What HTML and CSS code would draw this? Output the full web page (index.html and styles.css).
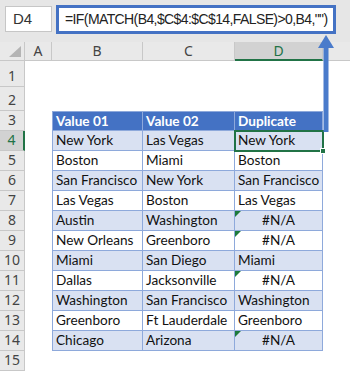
FILE: index.html
```html
<!DOCTYPE html>
<html>
<head>
<meta charset="utf-8">
<link rel="stylesheet" href="styles.css">
</head>
<body>
<div class="app">
  <div class="fbar">
    <div class="namebox">D4</div>
    <div class="formula">=IF(MATCH(B4,$C$4:$C$14,FALSE)&gt;0,B4,"")</div>
  </div>
  <div class="sheet">
    <div class="ch corner"><span class="tri"></span></div>
    <div class="ch">A</div>
    <div class="ch">B</div>
    <div class="ch">C</div>
    <div class="ch sel">D</div>
    <div class="ch rest"></div>

    <div class="rh tall">1</div><div class="e"></div><div class="e"></div><div class="e"></div><div class="e"></div><div class="e"></div>
    <div class="rh">2</div><div class="e"></div><div class="e"></div><div class="e"></div><div class="e"></div><div class="e"></div>

    <div class="rh">3</div><div class="e"></div>
    <div class="c hd first">Value 01</div><div class="c hd">Value 02</div><div class="c hd">Duplicate</div><div class="e"></div>

    <div class="rh rsel">4</div><div class="e"></div>
    <div class="c b first">New York</div><div class="c b">Las Vegas</div><div class="c b active">New York<span class="handle"></span></div><div class="e"></div>

    <div class="rh">5</div><div class="e"></div>
    <div class="c first">Boston</div><div class="c">Miami</div><div class="c">Boston</div><div class="e"></div>

    <div class="rh">6</div><div class="e"></div>
    <div class="c b first">San Francisco</div><div class="c b">New York</div><div class="c b">San Francisco</div><div class="e"></div>

    <div class="rh">7</div><div class="e"></div>
    <div class="c first">Las Vegas</div><div class="c">Boston</div><div class="c">Las Vegas</div><div class="e"></div>

    <div class="rh">8</div><div class="e"></div>
    <div class="c b first">Austin</div><div class="c b">Washington</div><div class="c b na"><span class="err"></span>#N/A</div><div class="e"></div>

    <div class="rh">9</div><div class="e"></div>
    <div class="c first">New Orleans</div><div class="c">Greenboro</div><div class="c na"><span class="err"></span>#N/A</div><div class="e"></div>

    <div class="rh">10</div><div class="e"></div>
    <div class="c b first">Miami</div><div class="c b">San Diego</div><div class="c b">Miami</div><div class="e"></div>

    <div class="rh">11</div><div class="e"></div>
    <div class="c first">Dallas</div><div class="c">Jacksonville</div><div class="c na"><span class="err"></span>#N/A</div><div class="e"></div>

    <div class="rh">12</div><div class="e"></div>
    <div class="c b first">Washington</div><div class="c b">San Francisco</div><div class="c b">Washington</div><div class="e"></div>

    <div class="rh">13</div><div class="e"></div>
    <div class="c first">Greenboro</div><div class="c">Ft Lauderdale</div><div class="c">Greenboro</div><div class="e"></div>

    <div class="rh">14</div><div class="e"></div>
    <div class="c b first">Chicago</div><div class="c b">Arizona</div><div class="c b na"><span class="err"></span>#N/A</div><div class="e"></div>

    <div class="rh">15</div><div class="e"></div><div class="e"></div><div class="e"></div><div class="e"></div><div class="e"></div>
  </div>
  <svg class="arrow" width="20" height="102" viewBox="0 0 20 102">
    <polygon points="10,2 2,15 18,15" fill="#4a7bcb"/>
    <rect x="7.5" y="13" width="5" height="86" fill="#4a7bcb"/>
  </svg>
</div>
</body>
</html>
```

FILE: styles.css
```css
* { box-sizing: border-box; }
html, body { margin: 0; padding: 0; background: #fff; }
.app {
  position: relative;
  width: 350px;
  height: 371px;
  overflow: hidden;
  background: #fff;
}
.fbar {
  height: 42px;
  background: #e6e6e6;
  display: flex;
  align-items: flex-start;
  padding: 5px 0 0 5px;
}
.namebox {
  width: 47px;
  height: 26px;
  margin-top: 1px;
  background: #fff;
  border: 1px solid #c6c6c6;
  font-family: "Liberation Sans", sans-serif;
  font-size: 15px;
  color: #333;
  padding-left: 7px;
  line-height: 24px;
}
.formula {
  margin-left: 4px;
  width: 280px;
  height: 29px;
  background: #fff;
  border: 3px solid #4472c4;
  font-family: "Liberation Sans", sans-serif;
  font-size: 14px;
  letter-spacing: -0.6px;
  color: #222;
  padding-left: 6px;
  line-height: 23px;
  white-space: nowrap;
  overflow: hidden;
}
.sheet {
  display: grid;
  grid-template-columns: 25px 27px 91px 92px 88px 27px;
  grid-template-rows: 19px 26px 24px repeat(13, 20px);
}
.ch {
  background: #e9e9e9;
  border-right: 1px solid #c8c8c8;
  border-bottom: 1px solid #c8c8c8;
  font-family: "Noto Sans", sans-serif;
  font-size: 14px;
  color: #444;
  display: flex;
  align-items: center;
  justify-content: center;
  line-height: 1;
}
.ch.corner { position: relative; }
.ch.corner .tri {
  position: absolute;
  right: 3px;
  bottom: 3px;
  width: 0;
  height: 0;
  border-left: 12px solid transparent;
  border-bottom: 11px solid #b4b4b4;
}
.ch.sel {
  background: #d2d2d2;
  border-bottom: 2px solid #217346;
  color: #217346;
}
.ch.rest { border-right: none; }
.rh {
  background: #e9e9e9;
  border-right: 1px solid #c8c8c8;
  border-bottom: 1px solid #c8c8c8;
  font-family: "Noto Sans", sans-serif;
  font-size: 14px;
  color: #444;
  display: flex;
  align-items: flex-end;
  justify-content: center;
  padding-bottom: 2px;
  line-height: 16px;
}
.rh.rsel {
  background: #d2d2d2;
  border-right: 2px solid #217346;
  color: #217346;
}
.e { background: #fff; }
.c {
  position: relative;
  background: #fff;
  border-right: 1px solid #8ea9db;
  border-bottom: 1px solid #8ea9db;
  font-family: "Lato", sans-serif;
  font-size: 13.6px;
  color: #111;
  padding-left: 3px;
  line-height: 19px;
  white-space: nowrap;
  overflow: hidden;
}
.c.first { border-left: 1px solid #8ea9db; }
.c.b { background: #d9e1f2; }
.c.hd {
  background: #4472c4;
  color: #fff;
  font-weight: bold;
  border-top: 1px solid #8ea9db;
  line-height: 18px;
}
.c.na { text-align: center; padding-left: 0; }
.err {
  position: absolute;
  left: 0;
  top: 0;
  width: 0;
  height: 0;
  border-top: 6px solid #1e7b3c;
  border-right: 6px solid transparent;
}
.c.active {
  overflow: visible;
  outline: 2px solid #217346;
  outline-offset: -1px;
  z-index: 2;
}
.handle {
  position: absolute;
  right: -4px;
  bottom: -4px;
  width: 6px;
  height: 6px;
  background: #217346;
  border: 1px solid #fff;
}
.arrow {
  position: absolute;
  left: 316px;
  top: 33px;
  z-index: 5;
}
```
